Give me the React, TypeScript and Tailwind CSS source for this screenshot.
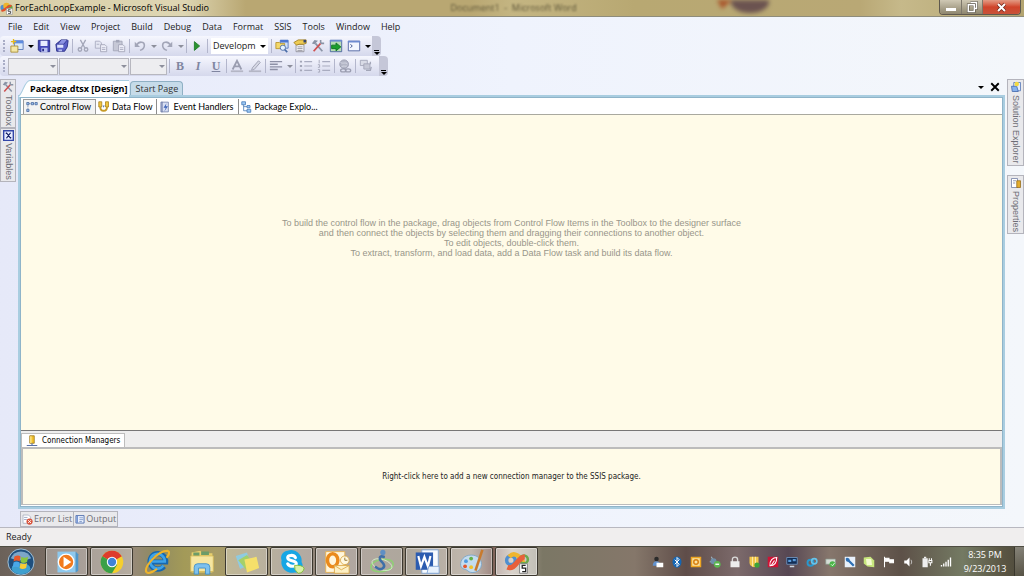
import type { ReactNode } from 'react'

type IconProps = { children: ReactNode; size?: string }

const Icon = ({ children, size = 'size-[14px]' }: IconProps) => (
  <svg aria-hidden="true" className={`${size} shrink-0`} fill="none" viewBox="0 0 16 16">
    {children}
  </svg>
)

const Caret = ({ muted = false }: { muted?: boolean }) => (
  <svg aria-hidden="true" className={`h-[3px] w-[6px] shrink-0 ${muted ? 'text-[#8d8f9c]' : 'text-black'}`} viewBox="0 0 6 3">
    <path d="M0 0h6L3 3z" fill="currentColor" />
  </svg>
)

const VsIcon = ({ size = 'size-[13px]' }: { size?: string }) => (
  <Icon size={size}>
    <circle cx="4" cy="7" fill="#4f8fd0" r="3.5" />
    <circle cx="8" cy="5" fill="#efb52e" r="4" />
    <circle cx="12" cy="7" fill="#5fa644" r="3.5" />
    <path d="M2 10c4 3 7-7 12-5" stroke="#e2512c" strokeWidth="3" />
    <path d="M8 8h7v7.500H8z" fill="#fff" stroke="#8e8e8e" strokeWidth=".7" />
    <path d="M13 9.500h-3v2h3v2.500h-3" stroke="#333" />
  </Icon>
)

const NewProjectIcon = () => (
  <Icon>
    <path d="M5 2h10v10H5z" fill="#d9e8fb" stroke="#5676b8" />
    <path d="M5 2h10v3H5z" fill="#5d8be0" />
    <path d="M1 8h8v7H1z" fill="#f4e7a7" stroke="#a88d34" />
    <path d="M4 0v6M1 3h6" stroke="#e5b91d" strokeWidth="1.500" />
  </Icon>
)

const SaveIcon = () => (
  <Icon>
    <path d="M1.500 1.500h13v13h-11l-2-2z" fill="#4448b8" stroke="#262a83" />
    <path d="M4 2h8v6H4z" fill="#e8edff" />
    <path d="M5 10h7v5H5z" fill="#b9c0f0" />
    <path d="M6 11h2v3H6z" fill="#262a83" />
  </Icon>
)

const SaveAllIcon = () => (
  <Icon>
    <path d="M7 1h7l1 1-1 7-3 5H2L1 6z" fill="#5a5fc6" stroke="#262a83" />
    <path d="M7 1L3 6h7l4-5" fill="#8d93e4" stroke="#262a83" strokeWidth=".8" />
    <path d="M2.500 6.500h7v3.500h-7z" fill="#dfe4ff" />
    <path d="M4 12h4v2H4z" fill="#b9c0f0" />
  </Icon>
)

const CutIcon = () => (
  <Icon>
    <path d="M5 1l5 9M11 1L6 10" stroke="#a3a6b8" strokeWidth="1.500" />
    <circle cx="4.500" cy="12" r="2" stroke="#a3a6b8" strokeWidth="1.500" />
    <circle cx="11.500" cy="12" r="2" stroke="#a3a6b8" strokeWidth="1.500" />
  </Icon>
)

const CopyIcon = () => (
  <Icon>
    <path d="M1.500 2.500h5l2 2v6h-7z" fill="#e4e6f2" stroke="#a9acc0" />
    <path d="M7.500 6.500h5l2 2v6h-7z" fill="#edeef8" stroke="#a3a6b8" />
    <path d="M9 10h4M9 12h4M3 6h3" stroke="#a9acc0" />
  </Icon>
)

const PasteIcon = () => (
  <Icon>
    <path d="M1.500 2.500h10v11h-10z" fill="#c6c8d6" stroke="#a3a6b8" />
    <path d="M4.500 1h4v3h-4z" fill="#a3a6b8" />
    <path d="M7.500 6.500h5l2 2v6h-7z" fill="#edeef8" stroke="#a3a6b8" />
    <path d="M9 10h4M9 12h4" stroke="#a9acc0" />
  </Icon>
)

const UndoIcon = () => (
  <Icon>
    <path d="M4 7c3-5 9-4 9 0 0 3-2 5-5 6" stroke="#a3a6b8" strokeWidth="1.800" />
    <path d="M2 3v6h6z" fill="#a3a6b8" />
  </Icon>
)

const RedoIcon = () => (
  <Icon>
    <path d="M12 7C9 2 3 3 3 7c0 3 2 5 5 6" stroke="#a3a6b8" strokeWidth="1.800" />
    <path d="M14 3v6H8z" fill="#a3a6b8" />
  </Icon>
)

const PlayIcon = () => (
  <Icon>
    <path d="M5 3l6 5-6 5z" fill="#2b9330" stroke="#1e7a26" />
  </Icon>
)

const FindIcon = () => (
  <Icon>
    <path d="M6 1.500h9v9H6z" fill="#cfe0fa" stroke="#5676b8" />
    <path d="M6 1h9v3H6z" fill="#4f78d0" />
    <path d="M1 4h4l1 1h5v6H1z" fill="#f3d86a" stroke="#b9962e" />
    <circle cx="9" cy="10" fill="#e6f3ff" r="3" stroke="#4a6da8" />
    <path d="M11 12l3 3" stroke="#4a6da8" strokeWidth="2" />
  </Icon>
)

const PropertiesIcon = () => (
  <Icon>
    <path d="M3.500 6.500h9v8h-9z" fill="#fff" stroke="#8a8a96" />
    <path d="M5 9h6M5 11h6M5 13h6" stroke="#8a8a96" />
    <path d="M1 4l5-3h9v4l-3 1H7L4 7z" fill="#eecb52" stroke="#a27f1e" />
    <path d="M12 1h3v3h-3z" fill="#35456f" />
  </Icon>
)

const ToolboxIcon = ({ size }: { size?: string }) => (
  <Icon size={size}>
    <path d="M5 5l8 9" stroke="#8a93a5" strokeWidth="2" />
    <path d="M1 5l3-4 4 1-4 4z" fill="#8a93a5" />
    <path d="M11 5L3 14" stroke="#cf5050" strokeWidth="2" />
    <path d="M11 1v3l1 1h3" stroke="#8a93a5" strokeWidth="1.800" />
  </Icon>
)

const StartPageIcon = () => (
  <Icon>
    <path d="M1.500 1.500h13v13h-13z" fill="#b7dcb5" stroke="#47629c" />
    <path d="M1 1h14v2H1z" fill="#6d8bd0" />
    <path d="M3 7h5V4.500L13.500 9 8 13.500V11H3z" fill="#1a9e2c" stroke="#0d7420" />
  </Icon>
)

const CommandIcon = () => (
  <Icon>
    <path d="M1.500 2.500h13v11h-13z" fill="#f3f7ff" stroke="#4a5f9f" />
    <path d="M1 2h14v2H1z" fill="#6d8bd0" />
    <path d="M4 6l2 2-2 2" stroke="#223a7c" />
  </Icon>
)

const FontColorIcon = () => (
  <Icon>
    <path d="M3 12L8 2l5 10M5 8.500h6" stroke="#9a9db0" strokeWidth="2" />
    <path d="M1 13h14v2H1z" fill="#b4b6c5" />
  </Icon>
)

const PenIcon = () => (
  <Icon>
    <path d="M5 10l7-8 2 2-7 8-3 1z" fill="#d6d8e4" stroke="#9a9db0" />
    <path d="M1 13h14v2H1z" fill="#b4b6c5" />
  </Icon>
)

const AlignIcon = () => (
  <Icon>
    <path d="M1 3h14M1 6h9M1 9h14M1 12h9" stroke="#8e91a6" strokeWidth="1.600" />
  </Icon>
)

const ListIcon = () => (
  <Icon>
    <path d="M1 3h2.500M1 8h2.500M1 13h2.500" stroke="#a3a6b8" strokeWidth="2.200" />
    <path d="M6 3h9M6 8h9M6 13h9" stroke="#a9acc0" strokeWidth="1.400" />
  </Icon>
)

const NumberedIcon = () => (
  <Icon>
    <path d="M2.500 1v4M1 6.500h2v3H1M1 12h2v3H1" stroke="#a3a6b8" />
    <path d="M6 3h9M6 8h9M6 13h9" stroke="#a9acc0" strokeWidth="1.400" />
  </Icon>
)

const GlobeIcon = () => (
  <Icon>
    <circle cx="7" cy="6" fill="#b3b6c6" r="5" stroke="#9a9db0" />
    <path d="M3 4c3 2 6-1 8 2M4 9c2-2 5 0 6-1" stroke="#d9dbe7" />
    <ellipse cx="6" cy="13" rx="3" ry="1.800" stroke="#9a9db0" strokeWidth="1.500" />
    <ellipse cx="11.500" cy="13" rx="3" ry="1.800" stroke="#9a9db0" strokeWidth="1.500" />
  </Icon>
)

const BlocksIcon = () => (
  <Icon>
    <path d="M1.500 1.500h8v6h-8z" fill="#d9dbe6" stroke="#a3a6b8" />
    <path d="M5.500 5.500h7v6h-7z" fill="#c6c8d6" stroke="#a3a6b8" />
    <path d="M13 3v3M8 13h5l1-4" stroke="#a3a6b8" strokeWidth="1.500" />
  </Icon>
)

const ControlFlowIcon = () => (
  <Icon size="size-[12px]">
    <path d="M1 2h3v3H1zM7 2h3v3H7zM12 2h3v3h-3zM1 11h3v3H1z" fill="#9cc0ee" stroke="#47679c" />
    <path d="M4 3.500h3M10 3.500h2M2.500 5v6" stroke="#47679c" strokeDasharray="1 1" />
  </Icon>
)

const DataFlowIcon = () => (
  <Icon size="size-[12px]">
    <path d="M1 1h4v7H1zM10 1h4v7h-4z" fill="#f1c540" stroke="#a47d16" />
    <path d="M3 8c0 4 2 5 4.500 5S12 12 12 8" stroke="#c79b28" strokeWidth="2.500" />
    <path d="M6 6l1.500 3L9 6z" fill="#5576b5" />
  </Icon>
)

const EventIcon = () => (
  <Icon size="size-[12px]">
    <path d="M2.500 1.500h10v13h-10z" fill="#d8dff2" stroke="#6a78a6" />
    <path d="M4 1v14" stroke="#6a78a6" strokeWidth="1.500" />
    <path d="M10 3L6 9h3l-2 5 5-7H9z" fill="#3d63b8" />
  </Icon>
)

const ExplorerIcon = () => (
  <Icon size="size-[12px]">
    <path d="M1 1h5v4H1zM8 6h4v3H8zM8 11h5v4H8z" fill="#9cc8f4" stroke="#3f74b4" />
    <path d="M3.500 5v8H8M3.500 7.500H8" stroke="#3f74b4" />
  </Icon>
)

const ConnectionIcon = () => (
  <Icon size="size-[12px]">
    <path d="M5 1h6v10H5z" fill="#f2c12e" stroke="#96700e" />
    <path d="M6.500 1.500v9" stroke="#fff0a5" strokeWidth="1.500" />
    <path d="M1 14h14M8 11v3" stroke="#5870a8" strokeWidth="1.500" />
  </Icon>
)

const VariablesIcon = () => (
  <Icon size="size-[11px]">
    <path d="M1 1h14v14H1z" fill="#e7ecff" stroke="#3346a8" strokeWidth="2" />
    <path d="M5 4l6 8M11 4l-6 8M4 5l2-1M10 12l2-1" stroke="#101c66" strokeWidth="1.800" />
  </Icon>
)

const SolutionIcon = () => (
  <Icon size="size-[12px]">
    <path d="M5 2h9v11H5z" fill="#e3edfd" stroke="#4b6fb3" />
    <path d="M2 7h7l2 7H3z" fill="#86b2ee" stroke="#3c62a7" />
    <circle cx="9" cy="4" fill="#f2d942" r="3" />
  </Icon>
)

const PropertyDockIcon = () => (
  <Icon size="size-[12px]">
    <path d="M2 2h8v12H2z" fill="#fff" stroke="#6b7aa0" />
    <path d="M4 5h4M4 8h3" stroke="#6b7aa0" />
    <path d="M9 5h5v9H9z" fill="#e4ad2e" stroke="#93691a" />
  </Icon>
)

const ErrorIcon = () => (
  <Icon size="size-[11px]">
    <path d="M1.500 1.500h8l3 3v9h-11z" fill="#fff" stroke="#9aa2b4" />
    <path d="M3 5h5M3 8h4" stroke="#7c8eb5" />
    <circle cx="11" cy="11" fill="#d8533c" r="4.500" />
    <path d="M9 9l4 4M13 9l-4 4" stroke="#fff" strokeWidth="1.400" />
  </Icon>
)

const OutputIcon = () => (
  <Icon size="size-[10px]">
    <path d="M1.500 2.500h13v12h-13z" fill="#eaf1ff" stroke="#5673b0" strokeWidth="1.500" />
    <path d="M3.500 3v11" stroke="#5a80cb" strokeWidth="2" />
    <path d="M7 6h6M7 9h6M7 12h4" stroke="#5673b0" />
  </Icon>
)

const ToolButton = ({ label, children }: { label: string; children: ReactNode }) => (
  <button aria-label={label} className="flex h-4 w-[18px] shrink-0 items-center justify-center" type="button">
    {children}
  </button>
)

const CaretButton = ({ label, muted }: { label: string; muted?: boolean }) => (
  <button aria-label={label} className="flex h-4 w-[9px] shrink-0 items-center justify-center" type="button">
    <Caret muted={muted} />
  </button>
)

const Separator = () => <span className="mx-px h-[14px] w-px shrink-0 bg-[#b3b6cc]" />

const Grip = () => <span className="mx-[3px] h-3 shrink-0 border-l-2 border-dotted border-[#a9adc6]" />

const Overflow = () => (
  <button
    aria-label="Toolbar options"
    className="flex h-5 w-[9px] shrink-0 flex-col items-center justify-end gap-px rounded-r-sm bg-[#c5c7d8] pb-px"
    type="button"
  >
    <span className="h-px w-[5px] bg-black" />
    <Caret />
  </button>
)

const EmptyCombo = ({ label, width }: { label: string; width: string }) => (
  <span className={`relative mr-px flex h-[17px] shrink-0 items-center ${width}`}>
    <select aria-label={label} className="h-full w-full appearance-none border border-[#b7b7bf] bg-[#ededf0]" disabled />
    <span className="pointer-events-none absolute right-[2px]">
      <Caret muted />
    </span>
  </span>
)

const toolbarClass = 'flex h-5 w-max items-center rounded-sm bg-linear-to-b from-[#f6f7fe] to-[#d5d8ec]'

const menus = ['File', 'Edit', 'View', 'Project', 'Build', 'Debug', 'Data', 'Format', 'SSIS', 'Tools', 'Window', 'Help']

const TitleBar = () => (
  <header className="flex h-[17px] items-center overflow-hidden border-b border-[#8e8c7b] bg-[linear-gradient(90deg,#d9cfa8_0,#ded6b3_18%,#b9a772_24%,#b9a772_46%,#c4b582_50%,#b8a872_62%,#b9a875_84%,#c6b98a_88%,#b3a470_100%)]">
    <div className="flex w-[44%] items-center gap-[2px]">
      <VsIcon />
      <h1 className="text-[9px] whitespace-nowrap text-black">ForEachLoopExample - Microsoft Visual Studio</h1>
    </div>
    <span className="w-[26%] text-[9px] whitespace-nowrap text-[#5f573a] blur-[1px]">Document1 &nbsp;- &nbsp;Microsoft Word</span>
    <svg aria-hidden="true" className="h-4 w-20 blur-[2px]" viewBox="0 0 80 16">
      <path d="M0 0h15L5 9z" fill="#a9562c" />
      <ellipse cx="33" cy="2" fill="#6b5350" rx="19" ry="11" />
    </svg>
    <div className="mr-[3px] ml-auto flex h-[15px] self-start overflow-hidden rounded-b-[4px] border border-t-0 border-[#5f594e] text-white">
      <button aria-label="Minimize" className="flex w-[22px] items-end justify-center border-r border-[#7d776a] bg-linear-to-b from-[#cfc8b4] to-[#8e866e] pb-[3px]" type="button">
        <span className="h-[3px] w-[10px] bg-white" />
      </button>
      <button aria-label="Restore" className="flex w-[21px] items-center justify-center border-r border-[#7d776a] bg-linear-to-b from-[#cfc8b4] to-[#8e866e]" type="button">
        <Icon size="size-[12px]">
          <path d="M6 2h8v8h-3M3 5h8v9H3z" stroke="#565044" strokeWidth="3.500" />
          <path d="M6 2h8v8h-3M3 5h8v9H3z" stroke="#fff" strokeWidth="2" />
        </Icon>
      </button>
      <button aria-label="Close" className="flex w-[37px] items-center justify-center bg-linear-to-b from-[#e29a84] via-[#d0432a] to-[#c8523a]" type="button">
        <Icon size="size-[11px]">
          <path d="M3 3l10 10M13 3L3 13" stroke="#6c2419" strokeWidth="5" />
          <path d="M3 3l10 10M13 3L3 13" stroke="#fff" strokeWidth="3" />
        </Icon>
      </button>
    </div>
  </header>
)

const StandardToolbar = () => (
  <div className={toolbarClass}>
    <Grip />
    <ToolButton label="New Project"><NewProjectIcon /></ToolButton>
    <CaretButton label="New options" />
    <ToolButton label="Save"><SaveIcon /></ToolButton>
    <ToolButton label="Save All"><SaveAllIcon /></ToolButton>
    <Separator />
    <ToolButton label="Cut"><CutIcon /></ToolButton>
    <ToolButton label="Copy"><CopyIcon /></ToolButton>
    <ToolButton label="Paste"><PasteIcon /></ToolButton>
    <Separator />
    <ToolButton label="Undo"><UndoIcon /></ToolButton>
    <CaretButton label="Undo options" muted />
    <ToolButton label="Redo"><RedoIcon /></ToolButton>
    <CaretButton label="Redo options" muted />
    <Separator />
    <ToolButton label="Start Debugging"><PlayIcon /></ToolButton>
    <Separator />
    <span className="relative mx-[2px] flex h-4 w-[57px] items-center">
      <select aria-label="Solution configuration" className="h-full w-full appearance-none bg-white pr-[8px] pl-[2px] text-[9px] text-[#222]">
        <option>Developm</option>
      </select>
      <span className="pointer-events-none absolute right-[2px]">
        <Caret />
      </span>
    </span>
    <Separator />
    <ToolButton label="Find in Files"><FindIcon /></ToolButton>
    <ToolButton label="Properties Window"><PropertiesIcon /></ToolButton>
    <ToolButton label="Toolbox"><ToolboxIcon /></ToolButton>
    <ToolButton label="Start Page"><StartPageIcon /></ToolButton>
    <ToolButton label="Command Window"><CommandIcon /></ToolButton>
    <CaretButton label="Other windows" />
    <Overflow />
  </div>
)

const letterClass = "font-['Liberation_Serif',serif] text-[12px] font-bold text-[#8085a0]"

const FormattingToolbar = () => (
  <div className={toolbarClass}>
    <Grip />
    <EmptyCombo label="Block format" width="w-[50px]" />
    <EmptyCombo label="Font name" width="w-[70px]" />
    <EmptyCombo label="Font size" width="w-[37px]" />
    <Separator />
    <ToolButton label="Bold"><span className={letterClass}>B</span></ToolButton>
    <ToolButton label="Italic"><span className={`${letterClass} italic`}>I</span></ToolButton>
    <ToolButton label="Underline"><span className={`${letterClass} underline`}>U</span></ToolButton>
    <Separator />
    <ToolButton label="Foreground Color"><FontColorIcon /></ToolButton>
    <ToolButton label="Background Color"><PenIcon /></ToolButton>
    <Separator />
    <ToolButton label="Alignment"><AlignIcon /></ToolButton>
    <CaretButton label="Alignment options" muted />
    <Separator />
    <ToolButton label="Bullets"><ListIcon /></ToolButton>
    <ToolButton label="Numbering"><NumberedIcon /></ToolButton>
    <Separator />
    <ToolButton label="Convert to Hyperlink"><GlobeIcon /></ToolButton>
    <Separator />
    <ToolButton label="Style Application"><BlocksIcon /></ToolButton>
    <span className="w-1" />
    <Overflow />
  </div>
)

const DockTab = ({ icon, text }: { icon: ReactNode; text: string }) => (
  <button
    className="flex w-full flex-col items-center gap-[2px] border border-[#b4b4bc] bg-[#e9e9ec] py-px font-['Liberation_Sans',sans-serif] text-[9px] leading-none text-[#6d6d75]"
    type="button"
  >
    {icon}
    <span className="[writing-mode:vertical-rl]">{text}</span>
  </button>
)

const BottomTab = ({ icon, text }: { icon: ReactNode; text: string }) => (
  <button
    className="-ml-px flex h-4 items-center gap-px border border-[#b4b4bc] bg-[#e9e9ec] px-px whitespace-nowrap text-[#6d6d75] first:ml-0"
    type="button"
  >
    {icon}
    {text}
  </button>
)

const designerTabs = [
  { text: 'Control Flow', icon: <ControlFlowIcon />, active: true },
  { text: 'Data Flow', icon: <DataFlowIcon /> },
  { text: 'Event Handlers', icon: <EventIcon /> },
  { text: 'Package Explo...', icon: <ExplorerIcon /> },
]

const Designer = () => (
  <section className="flex min-h-0 min-w-0 flex-1 flex-col border-2 border-t-0 border-[#a9cde0] bg-white">
    <div className="flex min-h-0 flex-1 flex-col border border-[#8fb4c9] pb-px">
      <div className="flex h-[17px] items-end border-b border-[#a9a99f] bg-white pl-[2px]">
        {designerTabs.map((tab) => (
          <button
            className={`flex h-[15px] items-center gap-[2px] border-r pr-1 pl-[2px] font-['Lato',sans-serif] text-[9px] whitespace-nowrap text-black ${
              tab.active ? 'border border-b-0 border-[#9d9d9d] bg-[#f3f3f3]' : 'border-[#8d8d8d] last:border-r-0'
            }`}
            key={tab.text}
            type="button"
          >
            {tab.icon}
            {tab.text}
          </button>
        ))}
      </div>
      <div className="flex flex-1 flex-col items-center bg-[#fffbe8] pt-[103px] text-center font-['Liberation_Sans',sans-serif] text-[9px] leading-[10px] text-[#98968a]">
        <p>To build the control flow in the package, drag objects from Control Flow Items in the Toolbox to the designer surface</p>
        <p>and then connect the objects by selecting them and dragging their connections to another object.</p>
        <p>To edit objects, double-click them.</p>
        <p>To extract, transform, and load data, add a Data Flow task and build its data flow.</p>
      </div>
      <div className="flex h-[17px] items-end border-t border-t-[#777] bg-[#eeeeee]">
        <button className="flex h-[14px] items-center gap-1 border border-b-0 border-[#bdbdbd] bg-white px-1 font-['DejaVu_Sans_Condensed','Open_Sans',sans-serif] text-[8px] whitespace-nowrap text-black" type="button">
          <ConnectionIcon />
          Connection Managers
        </button>
      </div>
      <div className="flex h-[58px] items-center justify-center border-2 border-b border-[#bcbcbc] bg-[#fffbe8] font-['DejaVu_Sans_Condensed','Open_Sans',sans-serif] text-[8px] text-[#222]">
        Right-click here to add a new connection manager to the SSIS package.
      </div>
    </div>
  </section>
)

const apps = [
  {
    name: 'Windows Media Player',
    open: true,
    art: (
      <>
        <path d="M4 3h21v24H4z" fill="#8ec9ee" />
        <path d="M25 3l3 3v19l-3 2z" fill="#4d97cb" />
        <circle cx="14" cy="15" fill="#f27a1d" r="9" stroke="#fff" strokeWidth="1.500" />
        <path d="M11 9l9 6-9 6z" fill="#fff" />
      </>
    ),
  },
  {
    name: 'Google Chrome',
    open: true,
    art: (
      <>
        <circle cx="15" cy="15" fill="#f5cf2e" r="13" />
        <path d="M15 15L3.700 8.500A13 13 0 0 1 26.300 8.500z" fill="#dd3b2d" />
        <path d="M15 15L3.700 8.500A13 13 0 0 0 15 28l6-10z" fill="#3aa047" />
        <circle cx="15" cy="15" fill="#fff" r="6" />
        <circle cx="15" cy="15" fill="#3f83d8" r="4.800" />
      </>
    ),
  },
  {
    name: 'Internet Explorer',
    open: false,
    art: (
      <>
        <path d="M23 20a9 9 0 1 1 2-5H9" fill="none" stroke="#1668b0" strokeWidth="6" />
        <path d="M22.500 19a8.500 8.500 0 1 1 1.500-4.500H9" fill="none" stroke="#3fa3e6" strokeWidth="3" />
        <path d="M3 27C-1 21 16 2 27 2c4 1 1 6-1 8M3 27c3 2 8-1 12-4" fill="none" stroke="#efb42a" strokeWidth="2.500" />
      </>
    ),
  },
  {
    name: 'Windows Explorer',
    open: false,
    art: (
      <>
        <path d="M3 4l10-2 3 3h11v22H3z" fill="#e8cf6e" />
        <path d="M5 4h7v4H5zM14 3h9v4h-9z" fill="#6c9c68" />
        <path d="M2 8h26v18H2z" fill="#f6e6a0" stroke="#d7ba58" />
        <path d="M6 29v-8q0-4 4-4h10q4 0 4 4v8h-5v-7h-8v7z" fill="#7dc1ee" stroke="#3f8fc9" />
      </>
    ),
  },
  {
    name: 'Sticky Notes',
    open: true,
    art: (
      <>
        <path d="M2 8l13-4 4 14-12 5z" fill="#8fcbe0" />
        <path d="M5 13l10-6 8 10-9 7z" fill="#a4d06a" />
        <path d="M12 12l14-3 3 13-14 5z" fill="#f5e06a" />
      </>
    ),
  },
  {
    name: 'Skype',
    open: true,
    art: (
      <>
        <path d="M10 2a8 8 0 0 0-7 11 12 12 0 0 0 15 14 8 8 0 0 0 8-12A12 12 0 0 0 10 2z" fill="#17a6e4" />
        <path d="M19 10c-2-4-9-3-9 0 0 5 10 2 10 7 0 4-8 4-10 0" fill="none" stroke="#fff" strokeLinecap="round" strokeWidth="3.500" />
        <path d="M18 19q8-1 11 3-1 6-7 6-5-4-4-9z" fill="#d9f0a8" stroke="#7ebc30" />
      </>
    ),
  },
  {
    name: 'Outlook',
    open: true,
    art: (
      <>
        <path d="M2 3h22v24H2z" fill="#fff6dc" stroke="#e8b04c" />
        <ellipse cx="10" cy="13" fill="none" rx="6" ry="7.500" stroke="#ea8a1c" strokeWidth="4" />
        <path d="M12 19h17v9H12z" fill="#fdf0c4" stroke="#dba848" />
        <path d="M12 19l8 5 9-5" fill="none" stroke="#dba848" />
        <circle cx="24" cy="13" fill="#fff8e0" r="5" stroke="#dba848" />
        <path d="M24 10v3h3" fill="none" stroke="#8a6a26" />
      </>
    ),
  },
  {
    name: 'Messenger',
    open: true,
    art: (
      <>
        <ellipse cx="15" cy="19" fill="none" rx="13" ry="7" stroke="#8fcf74" strokeWidth="1.800" transform="rotate(-10 15 19)" />
        <ellipse cx="15" cy="18" fill="none" rx="12" ry="6" stroke="#d4eec9" transform="rotate(18 15 18)" />
        <path d="M17 9c-6-2-5 3-3 5 3 3 5 6 2 8-2 2-6 1-8-1" fill="none" stroke="#3e6fa8" strokeLinecap="round" strokeWidth="3" />
        <circle cx="16" cy="4" fill="#5f8fc4" r="3" />
      </>
    ),
  },
  {
    name: 'Word',
    open: true,
    art: (
      <>
        <path d="M9 1h19v27H9z" fill="#f7fbff" stroke="#7fa3d4" />
        <path d="M2 4h20v20H2z" fill="#2b5cb0" />
        <path d="M5 8l3 12 4-11 4 11 3-12" fill="none" stroke="#fff" strokeWidth="2.500" />
        <path d="M17 20h12v8H15z" fill="#e7f1fc" stroke="#7fa3d4" />
      </>
    ),
  },
  {
    name: 'Paint',
    open: true,
    art: (
      <>
        <path d="M14 7C6 7 1 13 2 19c1 5 6 4 8 6 3 4 15 3 16-7 0-7-5-11-12-11z" fill="#c4dcee" stroke="#7aa4c6" />
        <circle cx="8" cy="14" fill="#4f9be0" r="2.200" />
        <circle cx="14" cy="11" fill="#64b04a" r="2.200" />
        <circle cx="7" cy="20" fill="#e4572e" r="2.200" />
        <circle cx="14" cy="21" fill="#f0c22d" r="2.200" />
        <path d="M27 1l-8 24" stroke="#c87a2e" strokeWidth="3" />
      </>
    ),
  },
  {
    name: 'Visual Studio',
    open: true,
    art: (
      <>
        <circle cx="8" cy="13" fill="none" r="5" stroke="#4f8fd0" strokeWidth="4" />
        <path d="M6 9c6-7 13 0 17 8" fill="none" stroke="#efb52e" strokeWidth="5" />
        <circle cx="23" cy="12" fill="none" r="4.500" stroke="#6aa84e" strokeWidth="3" />
        <path d="M4 21c9 4 12-12 20-12" fill="none" stroke="#e8603a" strokeWidth="6" />
        <path d="M18 17h9v11h-9z" fill="#fff" stroke="#777" />
        <path d="M25 19h-4v3h4v4h-4" fill="none" stroke="#222" strokeWidth="1.500" />
      </>
    ),
  },
]

const trayIcons = [
  { name: 'Messenger', art: <><circle cx="6" cy="4" fill="#2b2b2b" r="3" /><path d="M1 13q0-6 5-6t5 6z" fill="#6292cf" /><path d="M6 9h9v6H6z" fill="#fff" /></> },
  { name: 'Bluetooth', art: <><ellipse cx="8" cy="8" fill="#1466b4" rx="6" ry="7.500" /><path d="M5 5l6 6-3 3V2l3 3-6 6" stroke="#fff" strokeWidth="1.300" /></> },
  { name: 'Outlook', art: <><path d="M1 1h14v14H1z" fill="#eea521" /><path d="M3 3h10v10H3z" fill="#fae4a4" /><circle cx="8" cy="8" r="3" stroke="#d77f10" strokeWidth="2" /></> },
  { name: 'Network agent', art: <><path d="M3 1l3 5M1 8l8-3" stroke="#9fb4c4" strokeWidth="1.500" /><circle cx="6" cy="7" fill="#6f8fa9" r="4" /><circle cx="11" cy="11" fill="#5cb850" r="4.500" /><path d="M8.500 11h5" stroke="#fff" strokeWidth="1.800" /></> },
  { name: 'Lock', art: <><path d="M4.500 8V5q0-3.500 3.500-3.500T11.500 5v3" stroke="#dadada" strokeWidth="1.800" /><path d="M2 7h12v8H2z" fill="#ececec" /></> },
  { name: 'Shield', art: <><path d="M2 1h12v8q0 4-6 6-6-2-6-6z" fill="#f1c84b" /><path d="M6 1v13M10 1v13" stroke="#fff3c4" /><circle cx="12" cy="12" fill="#3da33a" r="3.500" /></> },
  { name: 'Security', art: <><path d="M1 1h14v14H1z" fill="#cf1234" /><path d="M4 13C3 6 8 2 13 2c0 7-3 11-9 11zM6 12l4-6" stroke="#fff" strokeWidth="1.400" /></> },
  { name: 'Display', art: <><path d="M1 2h14v9H1z" fill="#122d55" stroke="#7ba1ce" /><path d="M3 5h4v3H3zM9 4h4v3H9z" fill="#5b9cdc" /><path d="M5 14h6" stroke="#cfd8e2" strokeWidth="2" /></> },
  { name: 'Sync', art: <><ellipse cx="6" cy="9" rx="4" ry="4" stroke="#2898cf" strokeWidth="2.500" /><ellipse cx="11" cy="7" rx="3.500" ry="3.500" stroke="#66c3ea" strokeWidth="2.200" /></> },
  { name: 'Safely remove hardware', art: <><path d="M1 4h13v7H1z" fill="#d6ded6" stroke="#88948a" /><circle cx="10" cy="11" fill="#4bb648" r="4" /><path d="M8 11l2 2 3-4" stroke="#fff" /></> },
  { name: 'Tools', art: <><path d="M1 1h14v14H1z" fill="#e8f1fb" /><path d="M3 3l10 10" stroke="#2d6fb4" strokeWidth="3" /><circle cx="5" cy="5" fill="#2d6fb4" r="2.500" /></> },
  { name: 'Notes', art: <><path d="M1 2l9-1 5 5v9l-9-1-5-4z" fill="#c7e67d" /><path d="M4 4h7l1 8H5z" fill="#f3fbd0" /></> },
  { name: 'Action Center', art: <path d="M2 1v14M3 3h5v4H3zM9 5h5v4H9z" fill="#fff" stroke="#fff" strokeWidth="1.400" /> },
  { name: 'Volume', art: <><path d="M3 6h3l4-4v12l-4-4H3z" fill="#fff" /><path d="M12 5q2 3 0 6" stroke="#ddd" /></> },
  { name: 'Power', art: <><path d="M2 3h7v12H2z" fill="#eee" /><path d="M4 1h3v2H4z" fill="#eee" /><path d="M11 3v3M14 3v3M10.500 6h4v3h-4zM12.500 9v4" stroke="#fff" strokeWidth="1.400" /></> },
  { name: 'Wireless', art: <path d="M2 12v2M5 10v4M8 7.500V14M11 5v9M14 2v12" stroke="#fff" strokeWidth="1.800" /> },
]

const Taskbar = () => (
  <footer className="flex h-[30px] items-center overflow-hidden border-t border-[#4f4d42] bg-[linear-gradient(90deg,#6b6159_0,#83766c_8%,#978a78_13%,#8f8a62_15%,#a39a58_18%,#a89c66_21%,#a09470_24%,#93887a_29%,#8f8078_33%,#8c8272_40%,#a79a8c_46%,#7a5b52_48%,#b2a596_50%,#7b7765_53%,#85776a_62%,#5f4d49_67%,#7c6a6b_72%,#574753_77%,#86766c_81%,#5d5148_88%,#747a63_94%,#5a5543_98%,#4d493b_100%)]">
    <button aria-label="Start" className="flex w-[45px] shrink-0 justify-center pr-1" type="button">
      <svg aria-hidden="true" className="size-7" viewBox="0 0 30 30">
        <circle cx="15" cy="15" fill="#1f4f7d" r="14" stroke="#a6c6dc" />
        <ellipse cx="15" cy="22" fill="#3fa0cf" rx="10" ry="6" />
        <path d="M4 11a12 12 0 0 1 22 0q-11 5-22 0z" fill="#7da6c8" />
        <path d="M8 9q4-2 6.500 0l-1 5.500q-3-2-6.500 0z" fill="#e8582a" />
        <path d="M15.500 9.500q3 2 7 0l-1 5.500q-4 2-7 0z" fill="#8cc63e" />
        <path d="M7 15.500q3-2 6.500 0l-1 5.500q-3-2-6.500 0z" fill="#4aa8e8" />
        <path d="M14.500 16q3 2 7 0l-1 5.500q-4 2-7 0z" fill="#f8cc34" />
      </svg>
    </button>
    <nav aria-label="Taskbar" className="flex h-full gap-[2px]">
      {apps.map((app) => (
        <button
          aria-label={app.name}
          className={`flex h-full w-[43px] shrink-0 items-center justify-center last:bg-white/50 ${
            app.open ? 'rounded-[2px] border border-[#3c382f] bg-white/30 shadow-[inset_0_0_0_1px_rgba(255,255,255,0.4)]' : ''
          }`}
          key={app.name}
          type="button"
        >
          <svg aria-hidden="true" className="size-[26px] shrink-0" viewBox="0 0 30 30">
            {app.art}
          </svg>
        </button>
      ))}
    </nav>
    <div className="ml-auto grid w-[308px] grid-cols-16">
      {trayIcons.map((tray) => (
        <button aria-label={tray.name} className="flex items-center justify-center" key={tray.name} type="button">
          <Icon size="size-[12px]">{tray.art}</Icon>
        </button>
      ))}
    </div>
    <div className="w-[58px] text-center text-[9px] leading-[14px] whitespace-nowrap text-white">
      <p>8:35 PM</p>
      <p>9/23/2013</p>
    </div>
    <button aria-label="Show desktop" className="h-full w-[10px] border-l border-[#3a372d] bg-linear-to-b from-white/30 to-white/5" type="button" />
  </footer>
)

export default function App() {
  return (
    <div className="flex h-screen min-h-[400px] flex-col overflow-hidden bg-linear-to-r from-[#e6e9f9] via-[#eff3fd] to-[#f4f7fb] font-['Open_Sans','Noto_Sans',sans-serif] text-[9px] text-[#222]">
      <TitleBar />
      <nav aria-label="Menu" className="flex h-[19px] items-center gap-[11px] px-2 text-[#222]">
        {menus.map((menu) => (
          <button key={menu} type="button">
            {menu}
          </button>
        ))}
      </nav>
      <StandardToolbar />
      <FormattingToolbar />
      <main className="flex min-h-0 flex-1 pt-[3px]">
        <aside className="flex w-4 shrink-0 flex-col">
          <DockTab icon={<ToolboxIcon size="size-[12px]" />} text="Toolbox" />
          <DockTab icon={<VariablesIcon />} text="Variables" />
        </aside>
        <div className="flex min-w-0 flex-1 flex-col px-[2px]">
          <div className="flex h-[18px] shrink-0 items-end border-b-2 border-[#a9cde0]">
            <svg aria-hidden="true" className="-mb-[2px] h-[17px] w-3" preserveAspectRatio="none" viewBox="0 0 12 16">
              <path d="M0 16C5 14 6 1 12 1v15z" fill="#fff" />
              <path d="M0 15.500C5 14 6 .5 12 .5" fill="none" stroke="#a9cde0" />
            </svg>
            <button className="-mb-[2px] flex h-[17px] items-center border-t border-[#a9cde0] bg-white pr-[2px] pb-px font-bold whitespace-nowrap text-black" type="button">
              Package.dtsx [Design]
            </button>
            <button className="ml-px flex h-[14px] items-center rounded-t-sm border border-b-0 border-[#8fb0c4] bg-[#c6dbe9] px-1 whitespace-nowrap text-[#333]" type="button">
              Start Page
            </button>
            <button aria-label="Active files" className="ml-auto flex h-full w-[10px] items-center justify-center" type="button">
              <Caret />
            </button>
            <button aria-label="Close document" className="mr-[5px] ml-1 flex h-full items-center" type="button">
              <Icon size="size-[10px]">
                <path d="M2 2l12 12M14 2L2 14" stroke="#000" strokeWidth="3" />
              </Icon>
            </button>
          </div>
          <Designer />
          <div className="flex h-[18px] shrink-0 items-end px-[2px] pt-[2px]">
            <BottomTab icon={<ErrorIcon />} text="Error List" />
            <BottomTab icon={<OutputIcon />} text="Output" />
          </div>
        </div>
        <aside className="flex w-[17px] shrink-0 flex-col gap-[9px]">
          <DockTab icon={<SolutionIcon />} text="Solution Explorer" />
          <DockTab icon={<PropertyDockIcon />} text="Properties" />
        </aside>
      </main>
      <div className="flex h-[19px] shrink-0 items-center border-t border-[#b8b8c0] bg-[#f0eeee] px-[6px]" role="status">
        Ready
      </div>
      <Taskbar />
    </div>
  )
}
